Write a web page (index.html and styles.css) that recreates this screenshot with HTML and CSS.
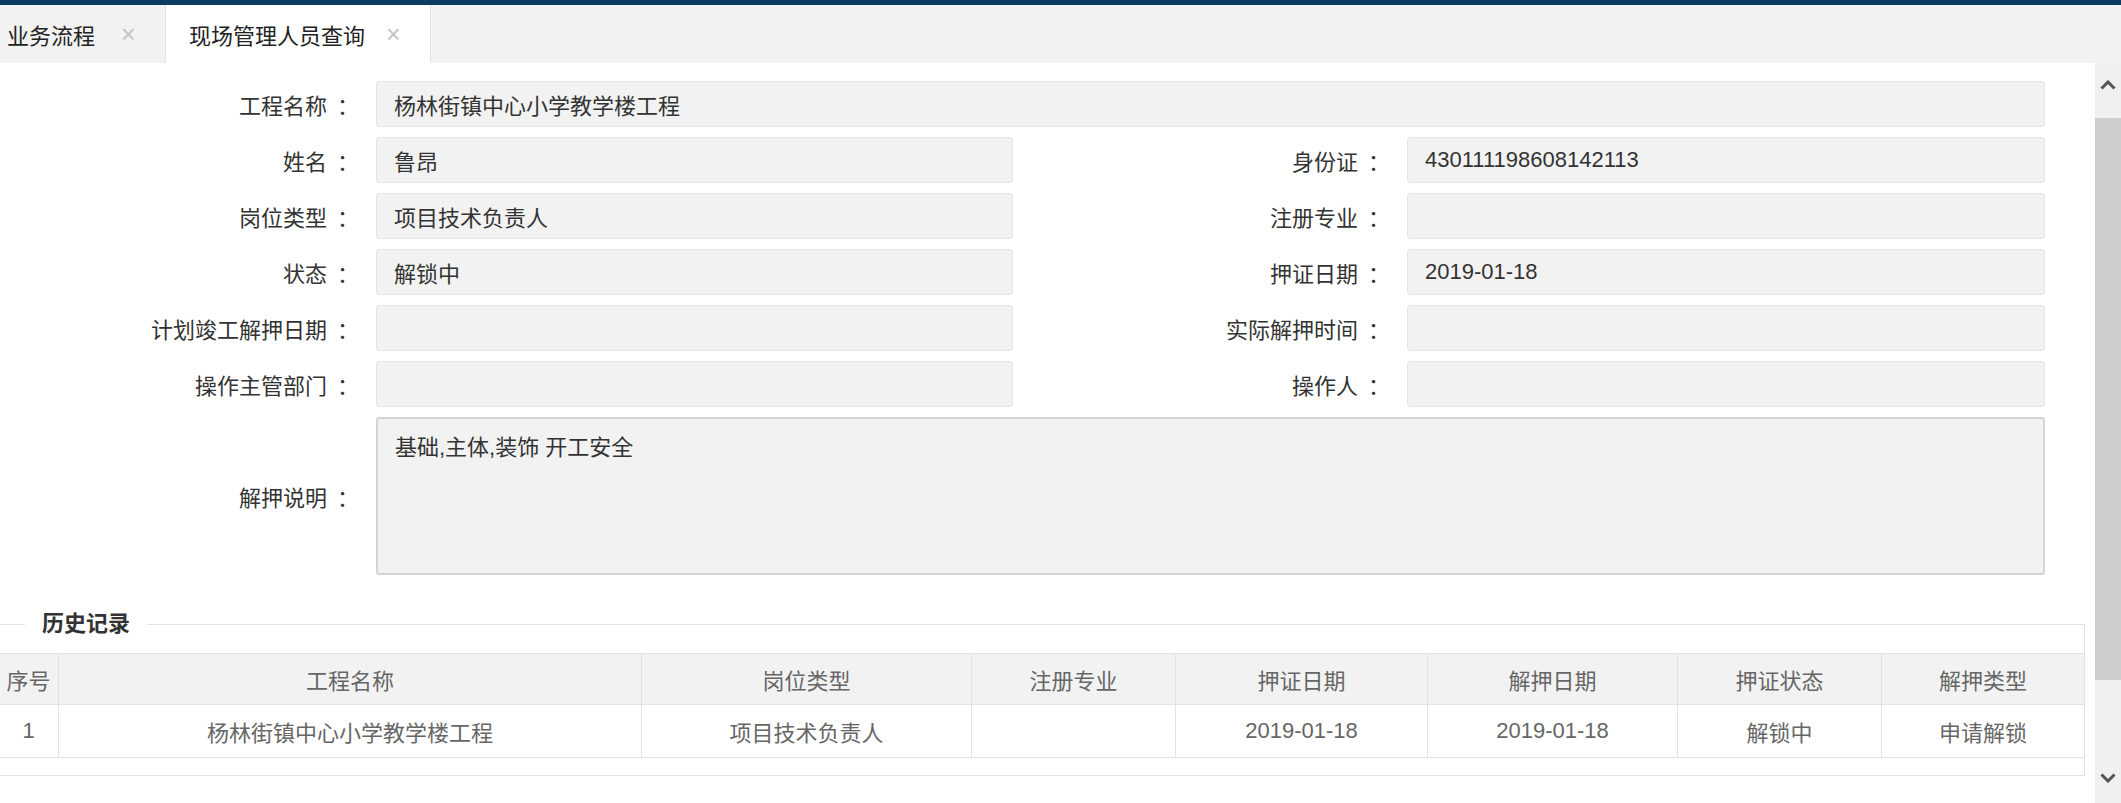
FILE: index.html
```html
<!DOCTYPE html>
<html lang="zh-CN">
<head>
    <meta charset="UTF-8">
    <title>现场管理人员查询</title>
    <link rel="stylesheet" href="styles.css">
</head>
<body>

<div class="topbar"></div>

<!-- Tabs -->
<div class="tabs">
    <div class="tab first">业务流程<span class="tab-close">×</span></div>
    <div class="tab active">现场管理人员查询<span class="tab-close">×</span></div>
</div>

<div class="main">
    <div class="content">

        <!-- Detail form -->
        <div class="form">
            <div class="label">工程名称<span class="colon">：</span></div>
            <div class="field wide">杨林街镇中心小学教学楼工程</div>

            <div class="label">姓名<span class="colon">：</span></div>
            <div class="field">鲁昂</div>
            <div class="label">身份证<span class="colon">：</span></div>
            <div class="field">430111198608142113</div>

            <div class="label">岗位类型<span class="colon">：</span></div>
            <div class="field">项目技术负责人</div>
            <div class="label">注册专业<span class="colon">：</span></div>
            <div class="field"></div>

            <div class="label">状态<span class="colon">：</span></div>
            <div class="field">解锁中</div>
            <div class="label">押证日期<span class="colon">：</span></div>
            <div class="field">2019-01-18</div>

            <div class="label">计划竣工解押日期<span class="colon">：</span></div>
            <div class="field"></div>
            <div class="label">实际解押时间<span class="colon">：</span></div>
            <div class="field"></div>

            <div class="label">操作主管部门<span class="colon">：</span></div>
            <div class="field"></div>
            <div class="label">操作人<span class="colon">：</span></div>
            <div class="field"></div>

            <div class="label memo-label">解押说明<span class="colon">：</span></div>
            <div class="field wide memo">基础,主体,装饰 开工安全</div>
        </div>

        <!-- History -->
        <fieldset class="history">
            <legend>历史记录</legend>
            <table class="grid">
                <colgroup>
                    <col style="width:60px">
                    <col style="width:583px">
                    <col style="width:330px">
                    <col style="width:204px">
                    <col style="width:252px">
                    <col style="width:250px">
                    <col style="width:204px">
                    <col>
                </colgroup>
                <thead>
                    <tr>
                        <th>序号</th>
                        <th>工程名称</th>
                        <th>岗位类型</th>
                        <th>注册专业</th>
                        <th>押证日期</th>
                        <th>解押日期</th>
                        <th>押证状态</th>
                        <th>解押类型</th>
                    </tr>
                </thead>
                <tbody>
                    <tr>
                        <td>1</td>
                        <td>杨林街镇中心小学教学楼工程</td>
                        <td>项目技术负责人</td>
                        <td></td>
                        <td>2019-01-18</td>
                        <td>2019-01-18</td>
                        <td>解锁中</td>
                        <td>申请解锁</td>
                    </tr>
                </tbody>
            </table>
        </fieldset>

    </div>

    <!-- Scrollbar -->
    <div class="scrollbar">
        <div class="sb-btn up">
            <svg width="16" height="10" viewBox="0 0 16 10"><path d="M1.5 8.5 L8 2 L14.5 8.5" fill="none" stroke="#555" stroke-width="3"/></svg>
        </div>
        <div class="sb-thumb"></div>
        <div class="sb-track"></div>
        <div class="sb-btn down">
            <svg width="16" height="10" viewBox="0 0 16 10"><path d="M1.5 1.5 L8 8 L14.5 1.5" fill="none" stroke="#555" stroke-width="3"/></svg>
        </div>
    </div>
</div>

</body>
</html>
```

FILE: styles.css
```css
/* General page styling */
body {
    font-family: "Liberation Sans", "Noto Sans CJK SC", sans-serif;
    font-size: 22px;
    color: #333;
    margin: 0;
    padding: 0;
    width: 2121px;
    height: 803px;
    overflow: hidden;
    background-color: #fff;
}

.topbar {
    height: 5px;
    background-color: #0c3a60;
}

/* Tabs */
.tabs {
    display: flex;
    height: 58px;
    background-color: #f2f2f2;
}

.tab {
    display: flex;
    align-items: center;
    box-sizing: border-box;
    height: 58px;
    color: #222;
    white-space: nowrap;
}

.tab.first {
    width: 166px;
    padding-left: 7px;
    border-right: 1px solid #e4e4e4;
}

.tab.active {
    width: 265px;
    padding-left: 23px;
    background-color: #fff;
    border-right: 1px solid #e4e4e4;
}

.tab-close {
    color: #c4c4c4;
    font-size: 25px;
    margin-left: 21px;
}

.tab.first .tab-close {
    margin-left: 26px;
}

/* Main area */
.main {
    display: flex;
    height: 740px;
}

.content {
    width: 2095px;
    background-color: #fff;
}

/* Detail form */
.form {
    display: grid;
    grid-template-columns: 376px 637px 394px 638px;
    grid-auto-rows: 46px;
    row-gap: 10px;
    padding-top: 18px;
}

.label {
    display: flex;
    align-items: center;
    justify-content: flex-end;
    padding-right: 17px;
    white-space: nowrap;
}

.label .colon {
    margin-left: 10px;
}

.field {
    display: flex;
    align-items: center;
    box-sizing: border-box;
    padding-left: 17px;
    background-color: #f2f2f2;
    border: 1px solid #e4e4e4;
    border-radius: 3px;
    color: #333;
}

.field.wide {
    grid-column: 2 / 5;
}

.field.memo {
    grid-row: span 3;
    height: 158px;
    align-items: flex-start;
    padding-top: 10px;
    border: 2px solid #d4d4d4;
}

.memo-label {
    grid-row: span 3;
    height: 158px;
}

/* History fieldset */
.history {
    margin: 34px 0 0 -3px;
    width: 2088px;
    box-sizing: border-box;
    padding: 14px 0 17px 0;
    border: 1px solid #e2e2e2;
}

.history legend {
    margin-left: 27px;
    padding: 0 17px;
    font-weight: bold;
    color: #333;
    line-height: 30px;
}

.grid {
    width: 100%;
    border-collapse: collapse;
    table-layout: fixed;
    color: #666;
}

.grid th,
.grid td {
    border: 1px solid #e2e2e2;
    text-align: center;
    font-weight: normal;
    white-space: nowrap;
    overflow: hidden;
}

.grid th {
    height: 48px;
    background-color: #f2f2f2;
}

.grid td {
    height: 50px;
}

.grid tr > :last-child {
    border-right: none;
}

/* Scrollbar */
.scrollbar {
    display: flex;
    flex-direction: column;
    width: 26px;
    background-color: #f0f0f0;
}

.sb-btn {
    display: flex;
    align-items: center;
    justify-content: center;
}

.sb-btn.up {
    height: 55px;
    padding-bottom: 12px;
    box-sizing: border-box;
}

.sb-btn.down {
    height: 50px;
}

.sb-thumb {
    height: 562px;
    background-color: #cdcdcd;
}

.sb-track {
    flex: 1;
}
```
